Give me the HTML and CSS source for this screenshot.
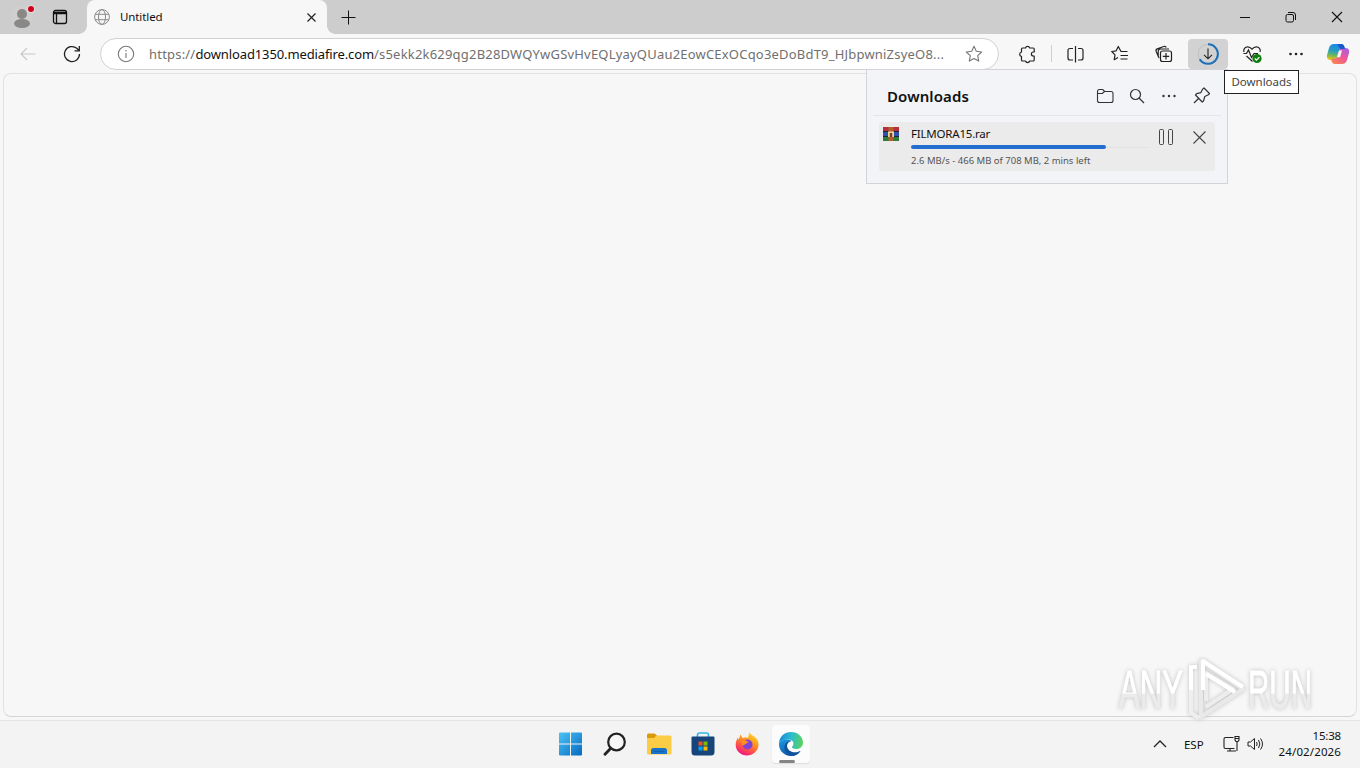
FILE: index.html
```
<!DOCTYPE html>
<html lang="en">
<head>
  <meta charset="UTF-8">
  <meta name="viewport" content="width=device-width, initial-scale=1.0">
  <title>Untitled</title>
  <link rel="stylesheet" href="styles.css">
</head>
<body>
  <header class="titlebar">
    <div class="title-left">
      <svg class="profile" width="24" height="26" viewBox="0 0 24 26">
        <circle cx="11" cy="14" r="11" fill="#d0cfce"/>
        <circle cx="11" cy="11" r="5" fill="#8a8886"/>
        <ellipse cx="11" cy="20.5" rx="8" ry="4.5" fill="#8a8886"/>
        <circle cx="20" cy="6" r="4" fill="#ddd"/>
        <circle cx="20" cy="6" r="3" fill="#d0021b"/>
      </svg>
      <svg class="tabs-icon" width="16" height="16" viewBox="0 0 16 16" fill="none" stroke="#111" stroke-width="1.3">
        <rect x="1.5" y="1.5" width="13" height="13" rx="2"/>
        <path d="M1.5 3.5h13M1.5 4.5h13M4.5 5v9.5"/>
      </svg>
    </div>
    <div class="tab">
      <svg width="16" height="16" viewBox="0 0 16 16" fill="none" stroke="#8a8a8a">
        <circle cx="8" cy="8" r="7.4"/>
        <ellipse cx="8" cy="8" rx="3.5" ry="7.4"/>
        <path d="M1.3 5.3h13.4M1.3 10.7h13.4"/>
      </svg>
      <span class="tab-title">Untitled</span>
      <svg class="tab-close" width="9" height="9" viewBox="0 0 9 9" stroke="#222" stroke-width="1.2"><path d="M.5.5l8 8M8.5.5l-8 8"/></svg>
    </div>
    <svg class="new-tab" width="15" height="15" viewBox="0 0 15 15" stroke="#111"><path d="M7.5.5v14M.5 7.5h14"/></svg>
    <div class="window-buttons">
      <svg width="46" height="34" viewBox="0 0 46 34" stroke="#111"><path d="M18 17.5h10"/></svg>
      <svg width="46" height="34" viewBox="0 0 46 34" fill="none" stroke="#111">
        <rect x="18" y="14.5" width="7.5" height="7.5" rx="1.5"/>
        <path d="M20 12.5h5a2.5 2.5 0 0 1 2.5 2.5v5"/>
      </svg>
      <svg width="46" height="34" viewBox="0 0 46 34" stroke="#111" stroke-width="1.1"><path d="M18 12l10 10M28 12l-10 10"/></svg>
    </div>
  </header>

  <nav class="toolbar">
    <svg class="back" width="16" height="14" viewBox="0 0 16 14" fill="none" stroke="#c9c9c9" stroke-width="1.2"><path d="M15.5 7H1M7 1L1 7l6 6"/></svg>
    <svg class="reload" width="18" height="18" viewBox="0 0 18 18" fill="none" stroke="#222" stroke-width="1.3">
      <path d="M16.5 9A7.5 7.5 0 1 1 13.8 3.3L16 5.5M16.3 1v4.8h-4.8"/>
    </svg>
    <div class="address">
      <svg class="info" width="18" height="18" viewBox="0 0 18 18" fill="none" stroke="#777" stroke-width="1.1">
        <circle cx="9" cy="9" r="7.7"/><path d="M9 8v5M9 5v1.5"/>
      </svg>
      <span class="url">https://<b>download1350.mediafire.com</b>/s5ekk2k629qg2B28DWQYwGSvHvEQLyayQUau2EowCExOCqo3eDoBdT9_HJbpwniZsyeO8...</span>
      <svg class="star" width="18" height="18" viewBox="0 0 18 18" fill="none" stroke="#777" stroke-width="1.1" stroke-linejoin="round">
        <path d="M9 1.3l2.3 5 5.4.7-4 3.7 1 5.4L9 13.5l-4.7 2.6 1-5.4-4-3.7 5.4-.7z"/>
      </svg>
    </div>
    <div class="actions">
      <svg width="44" height="30" viewBox="0 0 44 30" fill="none" stroke="#222" stroke-width="1.2" stroke-linejoin="round">
        <path d="M17.5 9h3a2.2 2.2 0 0 1 4.2 0h3.5a1 1 0 0 1 1 1v3h-.8a2 2 0 0 0 0 4h.8v4a1 1 0 0 1-1 1h-3.5a2.2 2.2 0 0 1-4.200 0h-3a1 1 0 0 1-1-1v-3.500a2.300 2.300 0 0 1 0-4.500v-3a1 1 0 0 1 1-1z"/>
      </svg>
      <i class="divider"></i>
      <svg width="44" height="30" viewBox="0 0 44 30" fill="none" stroke="#222" stroke-width="1.2">
        <path d="M19 9.5h-3a2 2 0 0 0-2 2v7.500a2 2 0 0 0 2 2h3M24 9.500h3a2 2 0 0 1 2 2v7.500a2 2 0 0 1-2 2h-3M21.500 7v16.500"/>
      </svg>
      <svg width="44" height="30" viewBox="0 0 44 30" fill="none" stroke="#222" stroke-width="1.2" stroke-linejoin="round">
        <path d="M29.500 12.500h-6.500L20.300 7.500l-2.100 4.300-4.500.7 3.300 3.300-.8 4.900 3.800-2.200M22.500 16.500h7.500M22.500 20h7"/>
      </svg>
      <svg width="44" height="30" viewBox="0 0 44 30" fill="none" stroke="#222" stroke-width="1.2">
        <rect x="18.500" y="12" width="11" height="10.500" rx="2"/>
        <path d="M24 14v6.500M20.800 17.300h6.400M17 19l-2.800-6.500a2 2 0 0 1 1.100-2.600l6.400-2.400a2 2 0 0 1 2.600 1.100M16.200 17v-4.500a2.500 2.500 0 0 1 2.500-2.500H27"/>
      </svg>
      <div class="download-button">
        <svg width="24" height="24" viewBox="0 0 24 24" fill="none">
          <circle cx="12" cy="12" r="9.800" stroke="#c0c0c0"/>
          <path d="M12 2.200a9.800 9.800 0 1 1-8.300 15" stroke="#1c70b8" stroke-width="2.100"/>
          <path d="M12 6.500v10M8 12.800l4 4 4-4" stroke="#222" stroke-width="1.100"/>
        </svg>
      </div>
      <svg class="health" width="48" height="30" viewBox="0 0 48 30" fill="none" stroke="#222" stroke-width="1.2">
        <path d="M24.500 22.500l-6-5.500M16 13c-1-3 1-5.200 3.700-5.200 1.800 0 3.200 1 4.300 2.400 1.100-1.400 2.500-2.400 4.300-2.400 2.700 0 4.700 2.200 3.700 5.200M15.500 14.500h3l2-3.500 3 7.500 2.500-4h4"/>
        <circle cx="29" cy="19.500" r="4.600" fill="#107c10" stroke="none"/>
        <path d="M26.800 19.500l1.600 1.600 3-3" stroke="#fff"/>
      </svg>
      <svg class="more" width="40" height="30" viewBox="0 0 40 30" fill="#222"><circle cx="14.500" cy="15" r="1.300"/><circle cx="20" cy="15" r="1.300"/><circle cx="25.500" cy="15" r="1.300"/></svg>
      <svg class="copilot" width="24" height="24" viewBox="0 0 24 24">
        <defs>
          <linearGradient id="cpA" x1=".5" y1="0" x2=".3" y2="1"><stop offset="0" stop-color="#1787e6"/><stop offset=".45" stop-color="#2c9fc0"/><stop offset=".7" stop-color="#68b760"/><stop offset="1" stop-color="#f0c414"/></linearGradient>
          <linearGradient id="cpB" x1=".9" y1="0" x2=".2" y2="1"><stop offset="0" stop-color="#a45ee8"/><stop offset=".5" stop-color="#ee5599"/><stop offset="1" stop-color="#fa8450"/></linearGradient>
        </defs>
        <path d="M8 2h7q2.500 0 3.200 2.200L19 7h-3q-2.500 0-3.200 2.500L11 15q-1 3-3.500 3H5q-5 0-4-5l2-7q1.200-4 5-4z" fill="url(#cpA)"/>
        <path d="M16 22H9q-2.500 0-3.200-2.200L5 17h3q2.500 0 3.200-2.500L13 9q1-3 3.500-3H19q5 0 4 5l-2 7q-1.200 4-5 4z" fill="url(#cpB)"/>
        <path d="M11.500 2H15q2.500 0 3.200 2.200L19 7h-3q-2 0-2.700-1.500z" fill="#1b57ce"/>
        <path d="M13 8.500h3l-1.900 6.800h-3.200z" fill="#f6f6f6"/>
      </svg>
    </div>
  </nav>

  <main class="page"></main>

  <section class="downloads">
    <div class="downloads-header">
      <h1>Downloads</h1>
      <svg width="32" height="24" viewBox="0 0 32 24" fill="none" stroke="#333" stroke-width="1.1">
        <path d="M8.500 7.500a2 2 0 0 1 2-2h3.200l2 2h6.300a2 2 0 0 1 2 2v7a2 2 0 0 1-2 2H10.500a2 2 0 0 1-2-2zM8.500 9.500h4.800l2.200-2"/>
      </svg>
      <svg width="32" height="24" viewBox="0 0 32 24" fill="none" stroke="#333" stroke-width="1.2"><circle cx="14.500" cy="10.500" r="5"/><path d="M18 14l5 5"/></svg>
      <svg width="32" height="24" viewBox="0 0 32 24" fill="#333"><circle cx="10.500" cy="12" r="1.200"/><circle cx="16" cy="12" r="1.200"/><circle cx="21.500" cy="12" r="1.200"/></svg>
      <svg width="32" height="24" viewBox="0 0 32 24" fill="none" stroke="#333" stroke-width="1.2" stroke-linejoin="round"><path d="M19 4l5.500 5.500-1.200 1.300-3.500 1.700-1.300 4.500-1.300 1L10.500 11l1.200-1.400 4.200-1 1.800-3.500zM13.500 14.500L9 19"/></svg>
    </div>
    <div class="download-item">
      <svg class="rar" width="16" height="16" viewBox="0 0 16 16">
        <path d="M0 1h16v4.500H0z" fill="#b5303c"/><path d="M0 5.500h16v5H0z" fill="#3050ad"/><path d="M0 10.500h16V15H0z" fill="#2f7c3c"/>
        <path d="M0 5.500h16M0 10.500h16" stroke="#20253a"/>
        <path d="M5.500 1h5v14h-5z" fill="#b3602a"/>
        <path d="M5 5.500h6v5.500H5z" fill="#edd494"/><path d="M6.800 7h2.400v4H6.800z" fill="#753e29"/>
      </svg>
      <div class="file">
        <div class="file-name">FILMORA15.rar</div>
        <div class="progress"><div class="bar"></div></div>
        <div class="status">2.6 MB/s - 466 MB of 708 MB, 2 mins left</div>
      </div>
      <svg class="pause" width="16" height="18" viewBox="0 0 16 18" fill="none" stroke="#444"><rect x="1.500" y="1.500" width="4" height="15" rx="1"/><rect x="10.500" y="1.500" width="4" height="15" rx="1"/></svg>
      <svg class="cancel" width="13" height="13" viewBox="0 0 13 13" stroke="#444" stroke-width="1.1"><path d="M.5.5l12 12M12.500.5l-12 12"/></svg>
    </div>
  </section>
  <div class="tooltip">Downloads</div>

  <svg class="watermark" width="230" height="84" viewBox="0 0 230 84">
    <defs>
      <linearGradient id="wm" x1="0" y1="0" x2="0" y2="1"><stop offset=".56" stop-color="#fff"/><stop offset=".58" stop-color="#ebebeb"/></linearGradient>
    </defs>
    <text x="8" y="58" textLength="64" lengthAdjust="spacingAndGlyphs" fill="url(#wm)" stroke="url(#wm)">ANY</text>
    <text x="137" y="58" textLength="64" lengthAdjust="spacingAndGlyphs" fill="url(#wm)" stroke="url(#wm)">RUN</text>
    <g fill="none" stroke-width="4" stroke-linejoin="round">
      <path d="M90 67V11l42 28-44 29" stroke="#e9e9e9"/>
      <path d="M86 17h-6v46l8 5" stroke="#efefef"/>
      <path d="M95 51V23l27 16-27 18" stroke="#ededed"/>
      <path d="M80 40V17h6M92 40V11l40 26" stroke="#fff"/>
      <path d="M95 24l29 18" stroke="#fff"/>
    </g>
  </svg>

  <footer class="taskbar">
    <div class="apps">
      <div class="app">
        <svg width="24" height="24" viewBox="0 0 24 24">
          <defs><linearGradient id="win" x1="0" y1="0" x2="1" y2="1"><stop offset="0" stop-color="#4bc4f5"/><stop offset="1" stop-color="#0669c2"/></linearGradient></defs>
          <path d="M0 1.500a1 1 0 0 1 1-1h10v11H0zM12 .5h10a1 1 0 0 1 1 1v10H12zM0 12.500h11v11H1a1 1 0 0 1-1-1zM12 12.500h11v10a1 1 0 0 1-1 1H12z" fill="url(#win)"/>
        </svg>
      </div>
      <div class="app">
        <svg width="24" height="24" viewBox="0 0 24 24" fill="none" stroke="#222"><circle cx="13.500" cy="10" r="8.300" stroke-width="2.200" fill="#f6f6f6"/><path d="M7.500 16.500L2 22.300" stroke-width="2.800" stroke-linecap="round"/></svg>
      </div>
      <div class="app">
        <svg width="26" height="24" viewBox="0 0 26 24">
          <path d="M1 3a1.500 1.500 0 0 1 1.500-1.500h6L11 3.500 9 7H1z" fill="#d99a08"/>
          <path d="M1 6h7l2.500-2.500H24A1.500 1.500 0 0 1 25.500 5v16a1.500 1.500 0 0 1-1.500 1.500H2.500A1.500 1.500 0 0 1 1 21z" fill="#fbcc45"/>
          <path d="M5 22v-3.500A2.500 2.500 0 0 1 7.500 16h11a2.500 2.500 0 0 1 2.500 2.500V22z" fill="#1774c8"/><path d="M8 19.500h10" stroke="#1060ad"/>
        </svg>
      </div>
      <div class="app">
        <svg width="24" height="24" viewBox="0 0 24 24">
          <path d="M6.500 6V3a2 2 0 0 1 2-2h7a2 2 0 0 1 2 2v3" fill="none" stroke="#35b6ec" stroke-width="1.700"/>
          <path d="M.5 5.500a1 1 0 0 1 1-1h21a1 1 0 0 1 1 1V20a3.500 3.500 0 0 1-3.500 3.500H4A3.500 3.500 0 0 1 .5 20z" fill="#17457b"/>
          <path d="M7.500 9.500h4v4h-4z" fill="#f25022"/><path d="M12.500 9.500h4v4h-4z" fill="#7fba00"/><path d="M7.500 14.500h4v4h-4z" fill="#00a4ef"/><path d="M12.500 14.500h4v4h-4z" fill="#ffb900"/>
        </svg>
      </div>
      <div class="app">
        <svg width="24" height="24" viewBox="0 0 24 24">
          <defs><linearGradient id="fx" x1=".8" y1="0" x2=".3" y2="1"><stop offset="0" stop-color="#ffe52e"/><stop offset=".4" stop-color="#ff9820"/><stop offset=".75" stop-color="#ff4650"/><stop offset="1" stop-color="#e9148c"/></linearGradient></defs>
          <path d="M14.500 0c1 3 5 4 7 6.500 1.500 2 2.300 4.500 2 7C23 19 18 23.500 12 23.500S.7 19 .7 13c0-3 1-6 2.300-7.500L3.500 8 5.500 2.500 7.500 6c2-1 4-1 5.500-.2z" fill="url(#fx)"/>
          <circle cx="12.500" cy="12.500" r="5" fill="#7e42d4"/>
          <path d="M5 8c3-1.500 5-.5 6.500 1l2 .5c0 1.500-2 1.500-3 2.500-2 2-4 2-4-1z" fill="#ff8b25"/>
        </svg>
      </div>
      <div class="app active">
        <svg width="26" height="26" viewBox="0 0 26 26">
          <defs>
            <linearGradient id="eg" x1="0" y1=".3" x2="1" y2=".4"><stop offset="0" stop-color="#1689d8"/><stop offset=".5" stop-color="#2bbcd0"/><stop offset="1" stop-color="#5bd35b"/></linearGradient>
            <linearGradient id="eb" x1="0" y1="0" x2=".5" y2="1"><stop offset="0" stop-color="#1b9de2"/><stop offset="1" stop-color="#1054a5"/></linearGradient>
          </defs>
          <path d="M1 12C1.500 5.500 6.500 1 13 1c7 0 12 5 12 10.500 0 4-3 6.500-6.500 6.500-3 0-4.500-1-4.500-2s1.500-1.500 1.500-3.500c0-2.500-2.500-4-5.500-4C6 8.500 2.500 10 1 12z" fill="url(#eg)"/>
          <path d="M1 12c1.500-2 4.500-3.500 8-3.500 2 0 3.500.5 4.500 1.500-3 0-4.500 2.500-4.500 5 0 4 4 6.500 8 6.500 2 0 4-.7 5.500-1.500C20.500 23 17 25 13 25 6 25 .5 19.500 1 12z" fill="url(#eb)"/>
          <path d="M9 15c0 4 4 6.500 8 6.500 2 0 4-.7 5.500-1.500-2 3-5 4.500-8 4.900C9 24 6 20 6.500 15.500 7 12.500 9.500 10 13.500 10 10.500 10.500 9 12.500 9 15z" fill="#12529c"/>
        </svg>
      </div>
    </div>
    <div class="tray">
      <svg class="chevron" width="14" height="8" viewBox="0 0 14 8" fill="none" stroke="#222" stroke-width="1.3"><path d="M1 7l6-6 6 6"/></svg>
      <span class="lang">ESP</span>
      <svg class="network" width="17" height="17" viewBox="0 0 17 17" fill="none" stroke="#222" stroke-width="1.1">
        <path d="M10.500 2.500h-8a1.500 1.500 0 0 0-1.500 1.500v8a1.500 1.500 0 0 0 1.500 1.500h9M7 13.500v2.500M4 16h9M14 6.500v9.500M12 1.500h4v3.500l-1 1.500h-2l-1-1.500zM12 3.500h4"/>
      </svg>
      <svg class="sound" width="17" height="14" viewBox="0 0 17 14" fill="none" stroke="#222" stroke-linejoin="round">
        <path d="M1 5h2.500L7.500 1.500v11L3.500 9H1zM9.500 5q1.300 2 0 4M11.500 3q2.700 4 0 8M13.500 1.500q4 5.500 0 11"/>
      </svg>
      <div class="clock"><div class="time">15:38</div><div>24/02/2026</div></div>
    </div>
  </footer>
</body>
</html>
```

FILE: styles.css
```
* {
  box-sizing: border-box;
}
body {
  margin: 0;
  width: 1360px;
  height: 768px;
  overflow: hidden;
  display: flex;
  flex-direction: column;
  background: #f7f7f7;
  color: #111;
  font-family: "Noto Sans", "Open Sans", sans-serif;
  font-size: 12px;
}
svg {
  display: block;
  flex: none;
}
.titlebar {
  height: 34px;
  display: flex;
  align-items: center;
  background: #cdcdcd;
}
.title-left {
  display: flex;
  align-items: center;
  width: 87px;
  height: 34px;
  padding-left: 11px;
}
.tabs-icon {
  margin-left: 17px;
}
.profile {
  margin-top: -2px;
}
.tab {
  position: relative;
  display: flex;
  align-items: center;
  width: 240px;
  height: 34px;
  padding: 0 11px 0 7px;
  background: #f7f7f7;
  border-radius: 8px 8px 0 0;
}
.tab::before,
.tab::after {
  content: "";
  position: absolute;
  bottom: 0;
  width: 8px;
  height: 8px;
}
.tab::before {
  left: -8px;
  background: radial-gradient(circle at 0 0, transparent 7.5px, #f7f7f7 8px);
}
.tab::after {
  right: -8px;
  background: radial-gradient(circle at 100% 0, transparent 7.5px, #f7f7f7 8px);
}
.tab-title {
  margin: 0 0 2px 10px;
  font-size: 11.5px;
  letter-spacing: -0.1px;
}
.tab-close {
  margin-left: auto;
}
.new-tab {
  margin-left: 14px;
}
.window-buttons {
  display: flex;
  margin-left: auto;
}
.toolbar {
  height: 39px;
  display: flex;
  align-items: center;
  padding: 0 10px 0 20px;
}
.reload {
  margin-left: 27px;
}
.address {
  display: flex;
  align-items: center;
  width: 899px;
  height: 32px;
  margin-left: 19px;
  padding: 0 15px 0 16px;
  background: #fff;
  border: 1px solid #d1d1d1;
  border-radius: 16px;
}
.url {
  margin-left: 14px;
  color: #707070;
  font-size: 13px;
  letter-spacing: 0.2px;
  white-space: nowrap;
}
.url b {
  color: #111;
  font-weight: 400;
  letter-spacing: -0.12px;
}
.star {
  margin-left: auto;
}
.actions {
  flex: 1;
  display: flex;
  align-items: center;
  margin-left: 6px;
}
.divider {
  width: 1px;
  height: 17px;
  margin: 0 2px;
  background: #d0d0d0;
}
.download-button {
  display: flex;
  align-items: center;
  justify-content: center;
  width: 40px;
  height: 30px;
  margin-left: 2px;
  border-radius: 4px;
  background: #d2d2d2;
}
.copilot {
  margin-left: 10px;
}
.page {
  height: 644px;
  margin: 0 3px;
  border: 1px solid #e1e1e1;
  border-bottom-color: #d5d5d5;
  border-radius: 8px;
}
.downloads {
  position: absolute;
  left: 866px;
  top: 69px;
  width: 362px;
  height: 115px;
  padding: 0 6px;
  background: #f3f4f8;
  border: 1px solid #d3d4da;
}
.downloads-header {
  display: flex;
  align-items: center;
  height: 46px;
  padding: 6px 4px 0 14px;
  border-bottom: 1px solid #e4e6ea;
}
.downloads-header h1 {
  margin: 0 auto 0 0;
  font-size: 15px;
  font-weight: 600;
  letter-spacing: 0.1px;
}
.download-item {
  display: flex;
  align-items: flex-start;
  height: 49px;
  margin: 6px 6px 0;
  padding: 0 9px 0 4px;
  background: #ebebeb;
  border-radius: 3px;
}
.rar {
  margin-top: 4px;
}
.file {
  width: 238px;
  margin-left: 12px;
}
.file-name {
  height: 23px;
  padding-top: 4px;
  font-size: 11.5px;
  line-height: 16px;
  letter-spacing: -0.2px;
}
.progress {
  height: 4px;
  border-radius: 2px;
  background: linear-gradient(#e2e2e2, #e2e2e2) center / 100% 1px no-repeat;
}
.bar {
  width: 195px;
  height: 4px;
  border-radius: 2px;
  background: #236fd1;
}
.status {
  margin-top: 4px;
  color: #555;
  font-size: 9.5px;
  line-height: 15px;
}
.pause {
  margin: 6px 0 0 9px;
}
.cancel {
  margin: 9px 0 0 auto;
}
.tooltip {
  position: absolute;
  left: 1224px;
  top: 70px;
  width: 75px;
  height: 24px;
  background: #fff;
  border: 1px solid #222;
  color: #444;
  font-size: 11.5px;
  line-height: 22px;
  text-align: center;
}
.watermark {
  position: absolute;
  left: 1111px;
  top: 650px;
  overflow: visible;
  filter: drop-shadow(0 0 2px #c0c0c0);
}
.watermark text {
  font-family: "Liberation Sans Narrow", "Liberation Sans", sans-serif;
  font-size: 53px;
}
.taskbar {
  display: flex;
  justify-content: space-between;
  height: 48px;
  margin-top: auto;
  padding-bottom: 2px;
  background: #f3f3f3;
  border-top: 1px solid #e5e5e5;
}
.apps {
  display: flex;
  gap: 4px;
  align-items: center;
  padding-left: 551px;
}
.app {
  display: flex;
  align-items: center;
  justify-content: center;
  position: relative;
  width: 40px;
  height: 38px;
}
.active {
  width: 38px;
  margin-left: 1px;
  background: #fcfcfc;
  border-radius: 4px;
  box-shadow: 0 1px 1px #ddd;
}
.active::after {
  content: "";
  position: absolute;
  bottom: 0;
  left: 7px;
  width: 16px;
  height: 3px;
  border-radius: 2px;
  background: #858585;
}
.tray {
  display: flex;
  align-items: center;
  padding-right: 19px;
}
.lang {
  margin: 1px 19px 0 17px;
  font-size: 11.5px;
}
.sound {
  margin-left: 7px;
}
.clock {
  margin-left: 15px;
  font-size: 11.5px;
  line-height: 16px;
  letter-spacing: 0.12px;
  text-align: right;
}
.time {
  letter-spacing: -0.2px;
}
```
